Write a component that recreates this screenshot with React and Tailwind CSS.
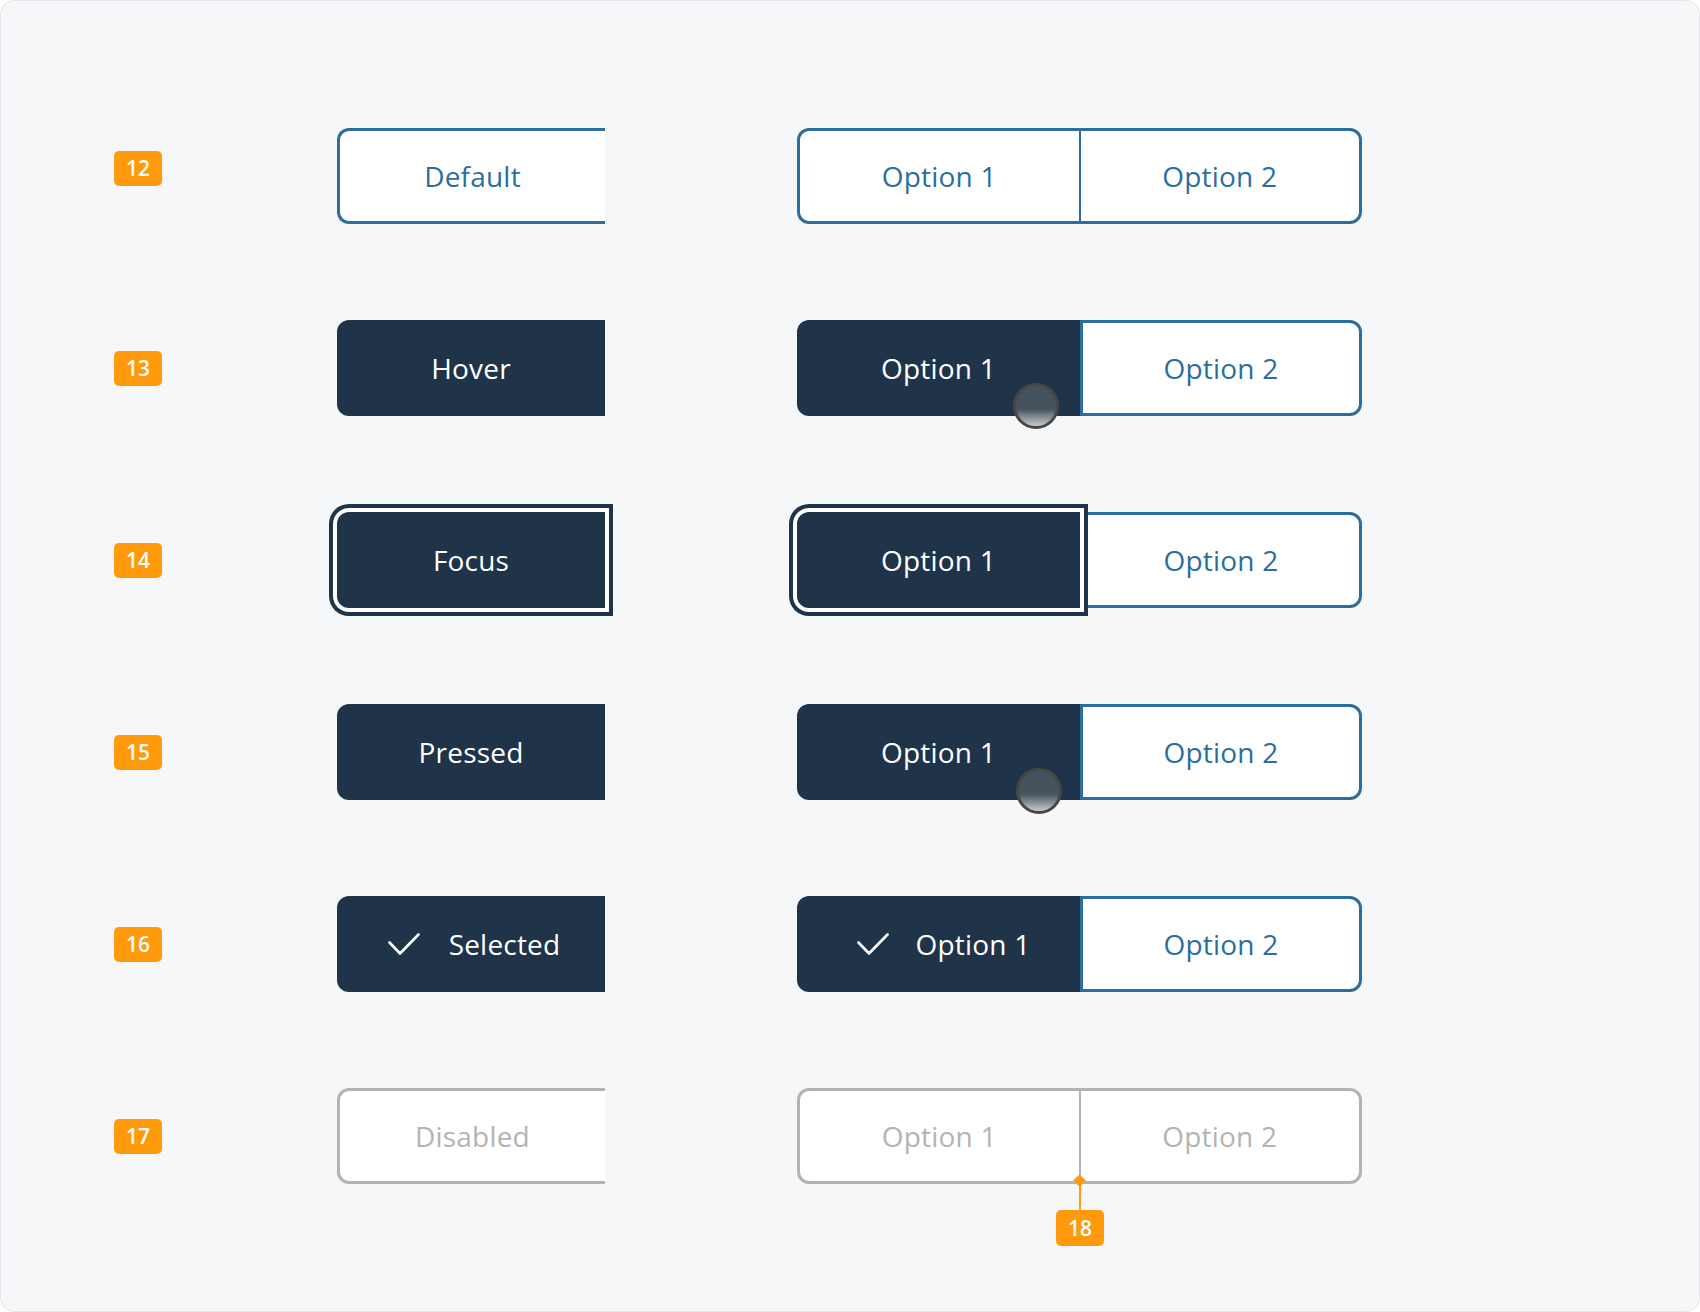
import React from "react";

function Badge({ n, className = "" }) {
  return (
    <div
      className={`w-[48px] h-[35px] shrink-0 rounded-[5px] bg-[#ff9a0d] text-white flex items-center justify-center text-[21px] font-semibold leading-none ${className}`}
    >
      {n}
    </div>
  );
}

function Check() {
  return (
    <svg width="32" height="24" viewBox="0 0 32 24" fill="none" className="shrink-0">
      <path d="M1.5 10.5 L12 21.5 L30.5 2.5" stroke="#ffffff" strokeWidth="2.6" strokeLinecap="round" strokeLinejoin="round" />
    </svg>
  );
}

function Cursor({ className = "" }) {
  return (
    <div
      className={`absolute w-[46px] h-[46px] rounded-full border-[3px] border-[#474747] bg-[linear-gradient(180deg,#46525e_0%,#46525e_58%,#c9cbcd_100%)] ${className}`}
    />
  );
}

function LeftButton({ variant, children }) {
  const base = "w-[268px] h-[96px] shrink-0 flex items-center justify-center text-[28px] tracking-[0.2px] rounded-l-[12px]";
  if (variant === "default")
    return <div className={`${base} bg-white border-[3px] border-r-0 border-[#2c6e9e] text-[#2c6e9e]`}>{children}</div>;
  if (variant === "disabled")
    return <div className={`${base} bg-white border-[3px] border-r-0 border-[#b3b3b3] text-[#b3b3b3]`}>{children}</div>;
  if (variant === "focus")
    return (
      <div className={`${base} bg-[#1f3349] text-white shadow-[0_0_0_4px_#ffffff,0_0_0_8px_#1f3349]`}>{children}</div>
    );
  if (variant === "selected")
    return (
      <div className={`${base} bg-[#1f3349] text-white gap-[29px] pl-[6px]`}>
        <Check />
        <span>{children}</span>
      </div>
    );
  return <div className={`${base} bg-[#1f3349] text-white`}>{children}</div>;
}

function Segmented({ variant }) {
  if (variant === "default" || variant === "disabled") {
    const c = variant === "default" ? "border-[#2c6e9e] text-[#2c6e9e]" : "border-[#b3b3b3] text-[#b3b3b3]";
    const d = variant === "default" ? "bg-[#2c6e9e]" : "bg-[#b3b3b3]";
    return (
      <div className="relative w-[565px] h-[96px] shrink-0">
        <div className={`w-full h-full flex bg-white border-[3px] rounded-[12px] text-[28px] tracking-[0.2px] ${c}`}>
          <div className="flex-1 flex items-center justify-center">Option 1</div>
          <div className={`w-[2px] h-full ${d}`} />
          <div className="flex-1 flex items-center justify-center">Option 2</div>
        </div>
        {variant === "disabled" && (
          <>
            <div className="absolute left-[278px] top-[88px] w-[9px] h-[9px] rotate-45 bg-[#ff9a0d]" />
            <div className="absolute left-[282px] top-[92px] w-[2px] h-[30px] bg-[#ff9a0d]" />
            <Badge n="18" className="absolute left-[259px] top-[122px] h-[36px]" />
          </>
        )}
      </div>
    );
  }
  const focus = variant === "focus";
  return (
    <div className="relative w-[565px] h-[96px] shrink-0 flex text-[28px] tracking-[0.2px]">
      <div
        className={`relative z-10 w-[283px] h-full rounded-l-[12px] bg-[#1f3349] text-white flex items-center justify-center ${
          focus ? "shadow-[0_0_0_4px_#ffffff,0_0_0_8px_#1f3349]" : ""
        } ${variant === "selected" ? "gap-[27px] pl-[10px]" : ""}`}
      >
        {variant === "selected" && <Check />}
        <span>Option 1</span>
      </div>
      <div className="w-[282px] h-full bg-white border-[3px] border-[#2c6e9e] rounded-r-[12px] text-[#2c6e9e] flex items-center justify-center">
        Option 2
      </div>
      {variant === "hover" && <Cursor className="z-20 left-[216px] top-[63px]" />}
      {variant === "pressed" && <Cursor className="z-20 left-[219px] top-[64px]" />}
    </div>
  );
}

const rows = [
  { n: "12", v: "default", label: "Default" },
  { n: "13", v: "hover", label: "Hover" },
  { n: "14", v: "focus", label: "Focus" },
  { n: "15", v: "pressed", label: "Pressed" },
  { n: "16", v: "selected", label: "Selected" },
  { n: "17", v: "disabled", label: "Disabled" },
];

export default function App() {
  return (
    <div className="w-[1700px] h-[1312px] bg-white font-['Open_Sans',sans-serif]">
      <div className="w-full h-full rounded-[14px] border border-[#e4e6e9] bg-[#f6f7f9] flex flex-col pt-[127px] pl-[113px] gap-[96px]">
        {rows.map((r) => (
          <div key={r.n} className="flex items-center h-[96px]">
            <Badge n={r.n} className={r.n === "12" ? "-translate-y-[8px]" : ""} />
            <div className="ml-[175px]">
              <LeftButton variant={r.v}>{r.label}</LeftButton>
            </div>
            <div className="ml-[192px]">
              <Segmented variant={r.v} />
            </div>
          </div>
        ))}
      </div>
    </div>
  );
}
